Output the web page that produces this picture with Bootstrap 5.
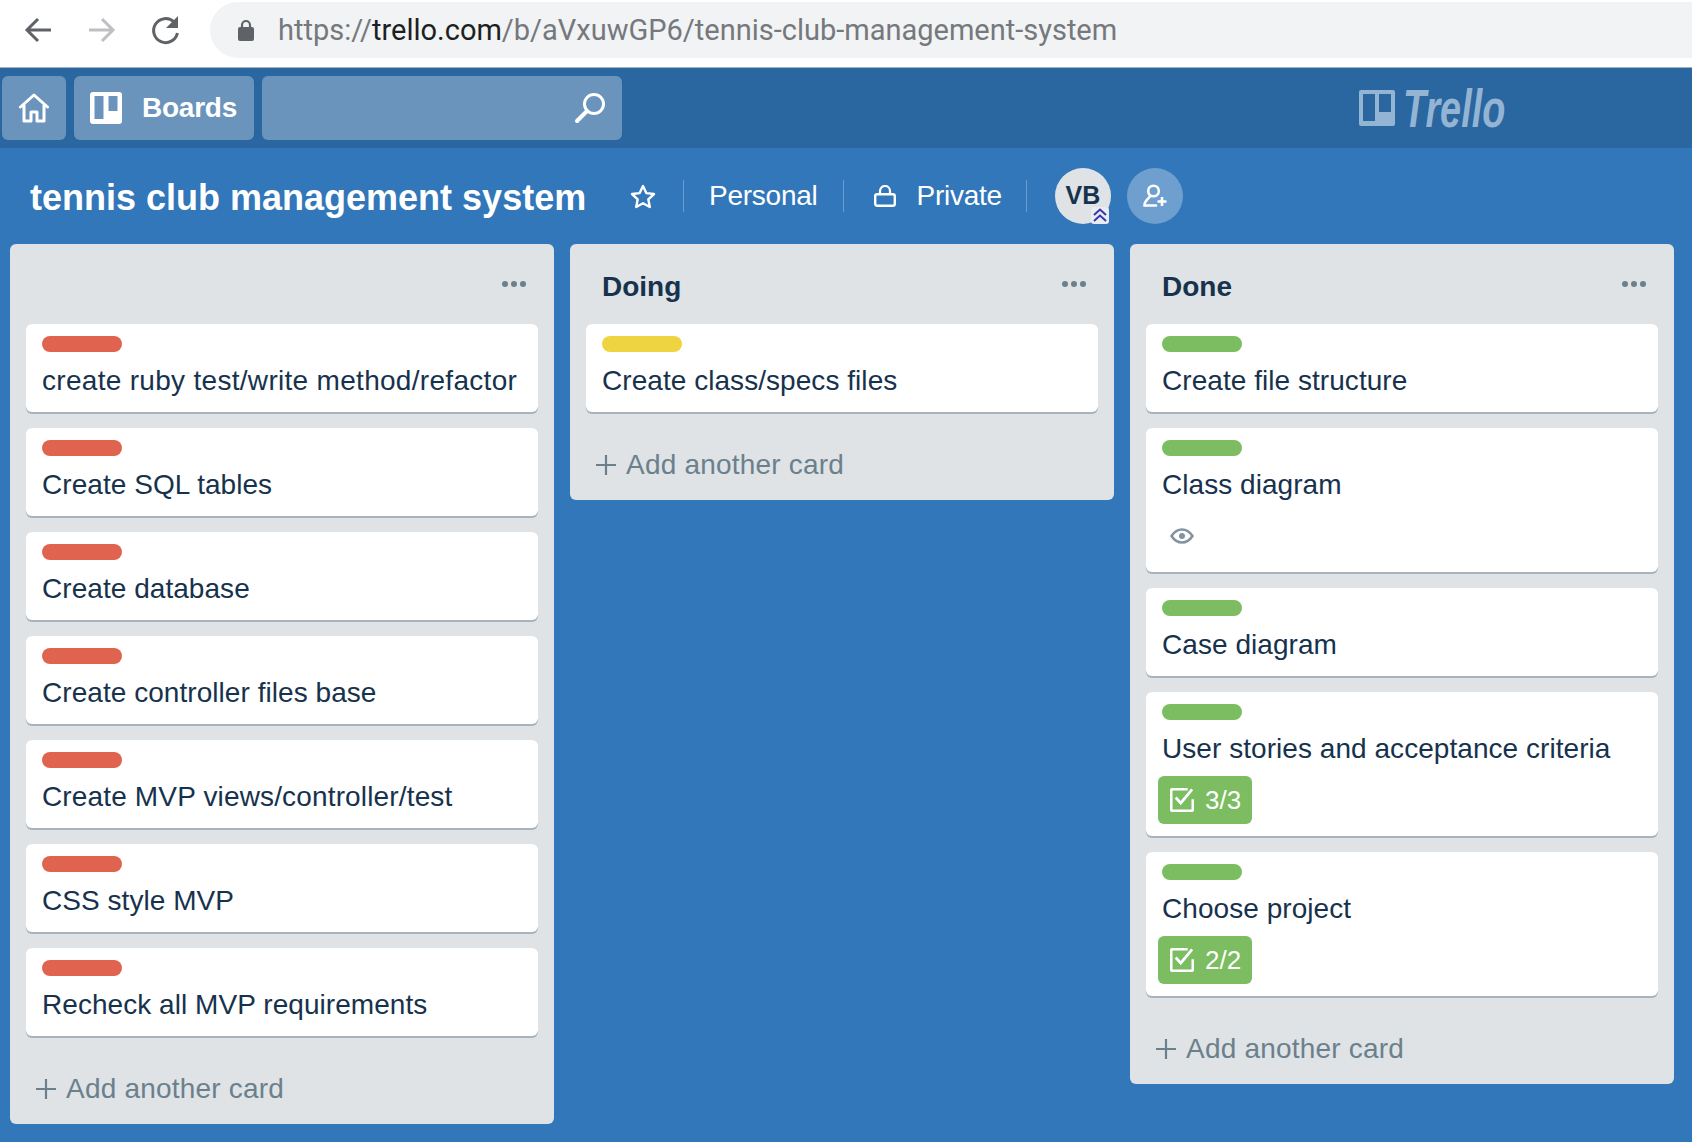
<!DOCTYPE html>
<html lang="en">
<head>
  <meta charset="UTF-8" />
  <meta name="viewport" content="width=device-width, initial-scale=1" />
  <title>tennis club management system | Trello</title>
  <link href="https://cdn.jsdelivr.net/npm/bootstrap@5.3.0/dist/css/bootstrap.min.css" rel="stylesheet" />
  <style>
    body { background: #3277b9; font-family: "Liberation Sans", Arial, sans-serif; color: #17324d; overflow: hidden; }

    /* browser toolbar */
    .browser-bar { height: 68px; background: #fff; border-bottom: 1px solid #9fb4c6; padding-top: 2px; }
    .nav-ico { flex: none; }
    .url-pill { height: 56px; margin-left: 30px; flex: 1; margin-right: -40px; background: #f1f3f4; border-radius: 28px; padding-left: 28px; font-family: Roboto, sans-serif; font-size: 29px; color: #75787c; white-space: nowrap; }
    .url-pill span { padding-top: 2px; }
    .url-pill b { font-weight: 400; color: #1d1f22; }

    /* trello top bar */
    .top-bar { height: 80px; background: #2a669f; padding: 8px 2px; gap: 8px; }
    .top-btn { height: 64px; background: #6b94bc; border-radius: 6px; color: #fff; }
    .home-btn { width: 64px; }
    .boards-btn { width: 180px; font-size: 28px; font-weight: 700; gap: 20px; padding-left: 16px; letter-spacing: -.25px; }
    .search-btn { width: 360px; padding-right: 16px; }
    .logo-wrap { margin-left: 729px; color: #94b4d3; gap: 8px; }
    .logo-word { display: inline-block; font-style: italic; font-weight: 700; font-size: 54px; line-height: 1; transform: scaleX(.7); transform-origin: left center; }

    /* board header */
    .board-bar { height: 96px; padding-left: 30px; color: #fff; }
    .board-title { font-size: 36px; font-weight: 700; margin: 3px 0 0; width: 600px; white-space: nowrap; }
    .bar-sep { width: 1px; height: 32px; background: #6b9ccb; }
    .bar-text { font-size: 28px; letter-spacing: -.25px; }
    .avatar { width: 56px; height: 56px; border-radius: 50%; }
    .avatar-vb { background: #dfe3e6; color: #17324d; font-size: 25px; font-weight: 700; }
    .avatar-add { background: #6f9fcf; }
    .gold-tag { position: absolute; right: 2px; bottom: 0; width: 18px; height: 17px; background: #e8ecf5; border-radius: 3px; }

    /* lists */
    .lists { padding-left: 10px; gap: 16px; }
    .lane { width: 544px; background: #dfe3e6; border-radius: 6px; padding: 0 16px 18px; }
    .lane-head { height: 80px; padding: 0 16px; }
    .lane-title { font-size: 28px; font-weight: 700; margin: 6px 0 0; color: #17324d; line-height: 1; }
    .lane-dots { margin-left: auto; gap: 3px; margin-right: -4px; }
    .lane-dots i { width: 6px; height: 6px; background: #6b808c; border-radius: 50%; }
    .task { background: #fff; border: 0; border-radius: 6px; box-shadow: 0 2px 0 #a9b3bc; margin-bottom: 16px; padding: 12px 16px 0; min-height: 88px; font-size: 28px; line-height: 40px; color: #17324d; }
    .tag { display: block; width: 80px; height: 16px; border-radius: 8px; margin-bottom: 9px; }
    .tag-red { background: #e0634f; }
    .tag-green { background: #7bbd60; }
    .tag-yellow { background: #efd442; }
    .task-text { letter-spacing: .05px; white-space: nowrap; }
    .task-text.wide-line { letter-spacing: .3px; }
    .task-text.mid-line { letter-spacing: .15px; }
    .watch-row { height: 67px; padding: 23px 0 0 8px; }
    .check-tag { width: 94px; height: 48px; margin: 7px 0 12px -4px; background: #7bbd60; border-radius: 6px; color: #fff; font-size: 26px; padding-left: 12px; gap: 11px; line-height: 1; }
    .add-row { height: 36px; margin-top: 34px; padding-left: 8px; padding-top: 1px; color: #6b808c; font-size: 28px; gap: 8px; line-height: 1; letter-spacing: .2px; }
  </style>
</head>
<body>
  <svg width="0" height="0" class="d-none">
    <symbol id="i-check" viewBox="3 3 19 19"><path d="M4.500 3h12.500v2H5v15h15v-8h2v8.500a1.500 1.500 0 0 1-1.500 1.500h-16A1.500 1.500 0 0 1 3 20.500v-16A1.500 1.500 0 0 1 4.500 3z" fill="#fff"/><path d="M7.500 10.500l4 4.500 9-11" fill="none" stroke="#fff" stroke-width="2.200"/></symbol>
    <symbol id="i-plus" viewBox="0 0 24 24"><path d="M12 2v20M2 12h20" stroke="#6b808c" stroke-width="2.200" fill="none"/></symbol>
  </svg>

  <div class="browser-bar d-flex align-items-start">
    <svg class="nav-ico ms-4 mt-2" width="28" height="40" viewBox="0 0 28 40"><path d="M27 20H4M14 9L3 20l11 11" fill="none" stroke="#5f6368" stroke-width="3"/></svg>
    <svg class="nav-ico mt-2" style="margin-left:36px" width="28" height="40" viewBox="0 0 28 40"><path d="M1 20h23M14 9l11 11-11 11" fill="none" stroke="#bdbfc2" stroke-width="3"/></svg>
    <svg class="nav-ico mt-2" style="margin-left:34px" width="30" height="40" viewBox="0 0 30 40"><path d="M24 12a12 12 0 1 0 3.400 11" fill="none" stroke="#5f6368" stroke-width="3"/><path d="M28 6v12H16z" fill="#5f6368"/></svg>
    <div class="url-pill d-flex align-items-center">
      <svg width="16" height="22" viewBox="0 0 16 22" class="me-4 flex-shrink-0"><path d="M4 9V6a4 4 0 0 1 8 0v3" fill="none" stroke="#5f6368" stroke-width="2.200"/><rect y="8" width="16" height="14" rx="2" fill="#5f6368"/></svg>
      <span>https://<b>trello.com</b>/b/aVxuwGP6/tennis-club-management-system</span>
    </div>
  </div>

  <div class="top-bar d-flex align-items-center">
    <div class="top-btn home-btn d-flex align-items-center justify-content-center">
      <svg width="32" height="30" viewBox="0 0 32 30"><path d="M2.500 14L16 2l13.500 12M6 12v16h7v-9h6v9h7V12" fill="none" stroke="#fff" stroke-width="3" stroke-linejoin="round" stroke-linecap="round"/></svg>
    </div>
    <div class="top-btn boards-btn d-flex align-items-center">
      <svg width="32" height="32" viewBox="0 0 32 32"><path fill="#fff" fill-rule="evenodd" d="M3 0h26a3 3 0 0 1 3 3v26a3 3 0 0 1-3 3H3a3 3 0 0 1-3-3V3a3 3 0 0 1 3-3zm1.500 4v23h9V4zm14 0v15h9V4z"/></svg>
      <span>Boards</span>
    </div>
    <div class="top-btn search-btn d-flex align-items-center justify-content-end">
      <svg width="32" height="32" viewBox="0 0 32 32"><circle cx="20" cy="12" r="9.500" fill="none" stroke="#fff" stroke-width="3"/><path d="M13 19L3 29" stroke="#fff" stroke-width="4" stroke-linecap="round"/></svg>
    </div>
    <div class="logo-wrap d-flex align-items-center">
      <svg width="36" height="36" viewBox="0 0 36 36"><path fill="#94b4d3" fill-rule="evenodd" d="M2 0h32a2 2 0 0 1 2 2v32a2 2 0 0 1-2 2H2a2 2 0 0 1-2-2V2a2 2 0 0 1 2-2zm2 4v27h12V4zm16 0v18h12V4z"/></svg>
      <span class="logo-word">Trello</span>
    </div>
  </div>

  <div class="board-bar d-flex align-items-center">
    <h1 class="board-title">tennis club management system</h1>
    <svg width="26" height="25" viewBox="0 0 26 25"><path d="M13 2l3.300 7.100 7.700.9-5.700 5.300 1.500 7.700L13 19.200 6.200 23l1.500-7.700L2 10l7.700-.9z" fill="none" stroke="#fff" stroke-width="2.400" stroke-linejoin="round"/></svg>
    <div class="bar-sep" style="margin-left:27px"></div>
    <span class="bar-text" style="margin-left:25px">Personal</span>
    <div class="bar-sep" style="margin-left:25px"></div>
    <svg style="margin-left:30px" width="22" height="22" viewBox="0 0 22 22"><path d="M6 9V6a5 5 0 0 1 10 0v3" fill="none" stroke="#fff" stroke-width="2.200"/><rect x="1.200" y="9.200" width="19.600" height="11.600" rx="2" fill="none" stroke="#fff" stroke-width="2.400"/></svg>
    <span class="bar-text" style="margin-left:21px">Private</span>
    <div class="bar-sep" style="margin-left:24px"></div>
    <div class="avatar avatar-vb position-relative d-flex align-items-center justify-content-center" style="margin-left:28px">
      VB
      <span class="gold-tag d-flex">
        <svg width="18" height="17" viewBox="0 0 18 17"><path d="M3 8l6-5.500L15 8M3 14l6-5.500 6 5.500" fill="none" stroke="#3a35a8" stroke-width="2"/></svg>
      </span>
    </div>
    <div class="avatar avatar-add d-flex align-items-center justify-content-center" style="margin-left:16px">
      <svg width="26" height="24" viewBox="0 0 26 24"><circle cx="11.500" cy="7" r="5.300" fill="none" stroke="#fff" stroke-width="2.600"/><path d="M8 12C6.500 15.500 2.500 16 2.500 21.500H14" fill="none" stroke="#fff" stroke-width="2.600" stroke-linecap="round"/><path d="M20 13v9M15.500 17.500h9" stroke="#fff" stroke-width="2.600"/></svg>
    </div>
  </div>

  <div class="lists d-flex align-items-start">
    <section class="lane">
      <div class="lane-head d-flex align-items-center">
        <div class="lane-dots d-flex"><i></i><i></i><i></i></div>
      </div>
      <div class="card task"><span class="tag tag-red"></span><div class="task-text wide-line">create ruby test/write method/refactor</div></div>
      <div class="card task"><span class="tag tag-red"></span><div class="task-text">Create SQL tables</div></div>
      <div class="card task"><span class="tag tag-red"></span><div class="task-text">Create database</div></div>
      <div class="card task"><span class="tag tag-red"></span><div class="task-text">Create controller files base</div></div>
      <div class="card task"><span class="tag tag-red"></span><div class="task-text mid-line">Create MVP views/controller/test</div></div>
      <div class="card task"><span class="tag tag-red"></span><div class="task-text">CSS style MVP</div></div>
      <div class="card task"><span class="tag tag-red"></span><div class="task-text">Recheck all MVP requirements</div></div>
      <div class="add-row d-flex align-items-center"><svg width="24" height="24"><use href="#i-plus"/></svg>Add another card</div>
    </section>

    <section class="lane">
      <div class="lane-head d-flex align-items-center">
        <h2 class="lane-title">Doing</h2>
        <div class="lane-dots d-flex"><i></i><i></i><i></i></div>
      </div>
      <div class="card task"><span class="tag tag-yellow"></span><div class="task-text">Create class/specs files</div></div>
      <div class="add-row d-flex align-items-center"><svg width="24" height="24"><use href="#i-plus"/></svg>Add another card</div>
    </section>

    <section class="lane">
      <div class="lane-head d-flex align-items-center">
        <h2 class="lane-title">Done</h2>
        <div class="lane-dots d-flex"><i></i><i></i><i></i></div>
      </div>
      <div class="card task"><span class="tag tag-green"></span><div class="task-text">Create file structure</div></div>
      <div class="card task"><span class="tag tag-green"></span><div class="task-text">Class diagram</div>
        <div class="watch-row"><svg width="24" height="16" viewBox="0 0 24 16" class="d-block"><path d="M1.500 8C4.500 3.500 8 1.500 12 1.500S19.500 3.500 22.500 8C19.500 12.500 16 14.500 12 14.500S4.500 12.500 1.500 8z" fill="none" stroke="#8393a0" stroke-width="2.600"/><circle cx="12" cy="8" r="3" fill="#8393a0"/></svg></div>
      </div>
      <div class="card task"><span class="tag tag-green"></span><div class="task-text">Case diagram</div></div>
      <div class="card task"><span class="tag tag-green"></span><div class="task-text">User stories and acceptance criteria</div>
        <div class="check-tag d-flex align-items-center"><svg width="24" height="24"><use href="#i-check"/></svg>3/3</div>
      </div>
      <div class="card task"><span class="tag tag-green"></span><div class="task-text">Choose project</div>
        <div class="check-tag d-flex align-items-center"><svg width="24" height="24"><use href="#i-check"/></svg>2/2</div>
      </div>
      <div class="add-row d-flex align-items-center"><svg width="24" height="24"><use href="#i-plus"/></svg>Add another card</div>
    </section>
  </div>

  <script src="https://cdn.jsdelivr.net/npm/bootstrap@5.3.0/dist/js/bootstrap.bundle.min.js"></script>
</body>
</html>
